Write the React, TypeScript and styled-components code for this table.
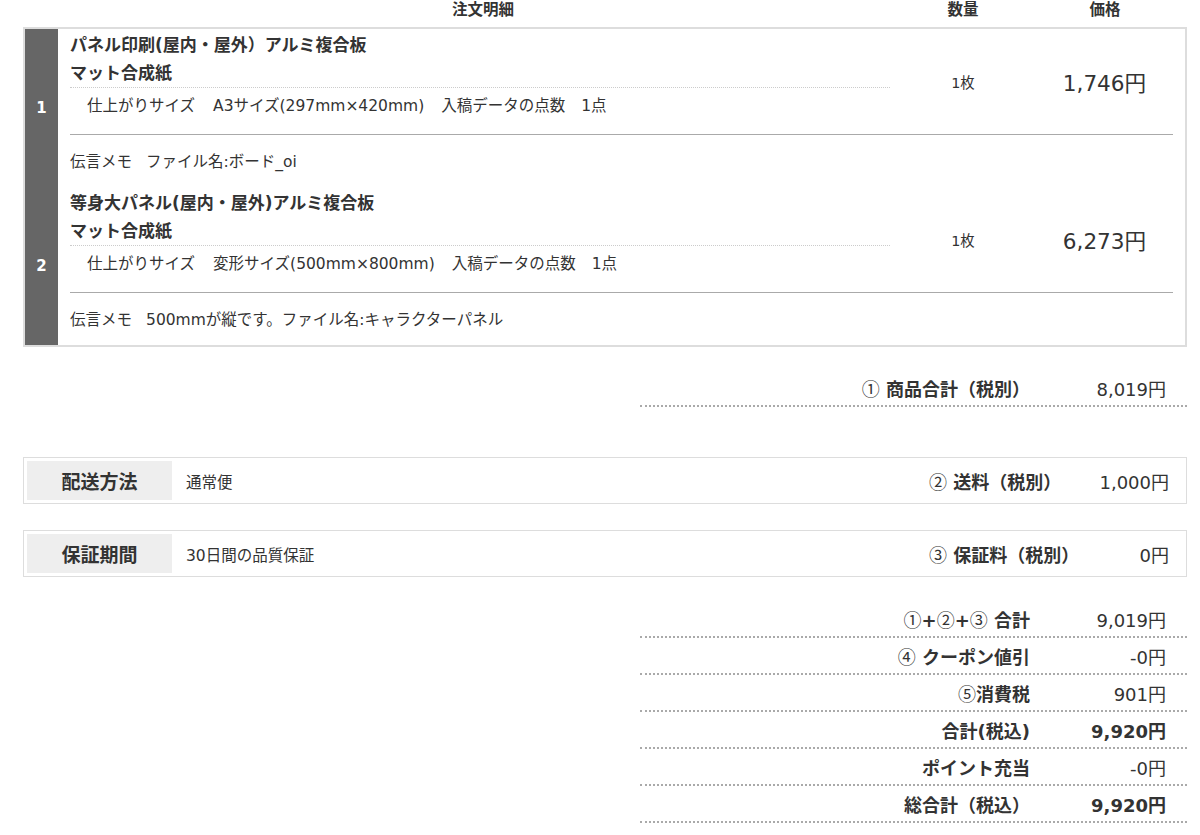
import React from "react";
import styled, { createGlobalStyle } from "styled-components";

const GlobalStyle = createGlobalStyle`
  html, body { margin: 0; padding: 0; background: #fff; }
  body {
    font-family: "DejaVu Sans", "Noto Sans CJK JP", sans-serif;
    color: #333;
  }
  * { box-sizing: border-box; }
`;

const Page = styled.div`
  width: 1200px;
  padding: 0 13px 0 23px;
`;

const HeaderRow = styled.div`
  display: grid;
  grid-template-columns: 47px 826px 134px 150px;
  height: 27px;
  line-height: 20px;
  font-size: 15.5px;
  font-weight: bold;
  color: #333;
`;

const HeaderCell = styled.div`
  text-align: center;
`;

const Table = styled.div`
  border: 2px solid #ddd;
`;

const ItemRow = styled.div`
  display: grid;
  grid-template-columns: 33px 1fr;
`;

const NumCell = styled.div`
  background: #666;
  color: #fff;
  font-weight: bold;
  font-size: 15px;
  display: flex;
  align-items: center;
  justify-content: center;
`;

const ItemBody = styled.div`
  padding: 0 12px;
`;

const Product = styled.div`
  display: grid;
  grid-template-columns: 1fr 146px 137px;
  border-bottom: 1px solid #aaa;
`;

const Desc = styled.div``;

const Title = styled.div`
  padding-top: 2px;
  font-size: 17px;
  font-weight: bold;
  line-height: 28px;
  border-bottom: 1px dotted #ccc;
`;

const Spec = styled.div`
  display: flex;
  padding: 6px 0 16px 17px;
  font-size: 15.5px;
  line-height: 24px;
`;

const SpecItem = styled.span`
  margin-right: 17px;
`;

const SpecValue = styled.span<{ $gap: number }>`
  margin-left: ${(p) => p.$gap}px;
`;

const Qty = styled.div`
  display: flex;
  align-items: center;
  justify-content: center;
  font-size: 14.4px;
`;

const Price = styled.div`
  display: flex;
  align-items: center;
  justify-content: center;
  font-size: 21.6px;
`;

const Memo = styled.div`
  padding: 15px 0 13px;
  font-size: 15.5px;
  line-height: 24px;
`;

const MemoValue = styled.span`
  margin-left: 14px;
`;

const SummaryList = styled.div<{ $top: number }>`
  width: 547px;
  margin-left: auto;
  margin-top: ${(p) => p.$top}px;
`;

const SummaryRow = styled.div`
  display: grid;
  grid-template-columns: 1fr 157px;
  align-items: center;
  height: 37px;
  padding: 5px 0 0;
  font-size: 18px;
  line-height: 26px;
  border-bottom: 2px dotted #aaa;
`;

const SumLabel = styled.div`
  text-align: right;
  font-weight: bold;
`;

const SumValue = styled.div<{ $bold?: boolean }>`
  text-align: right;
  padding-right: 21px;
  font-weight: ${(p) => (p.$bold ? "bold" : "normal")};
`;

const Circ = styled.span`
  font-family: "Noto Sans CJK JP", sans-serif;
  font-weight: normal;
  line-height: 1;
`;

const InfoBox = styled.div<{ $top: number }>`
  display: flex;
  margin-top: ${(p) => p.$top}px;
  border: 1px solid #ddd;
  padding: 3px;
`;

const BoxLabel = styled.div`
  width: 145px;
  height: 39px;
  background: #eee;
  font-size: 19px;
  font-weight: bold;
  display: flex;
  align-items: center;
  justify-content: center;
`;

const BoxValue = styled.div`
  flex: 1;
  margin-left: 14px;
  font-size: 15.5px;
  display: flex;
  align-items: center;
`;

const BoxFee = styled.div`
  width: 254px;
  padding-right: 14px;
  display: flex;
  align-items: center;
  justify-content: space-between;
  font-size: 18px;
`;

const FeeLabel = styled.span`
  font-weight: bold;
`;

function withCircles(text: string) {
  return text.split(/([①-⑤])/).map((part, i) =>
    /^[①-⑤]$/.test(part) ? (
      <Circ key={i}>{part}</Circ>
    ) : (
      <React.Fragment key={i}>{part}</React.Fragment>
    )
  );
}

type Item = {
  no: number;
  title: string[];
  size: string;
  count: string;
  qty: string;
  price: string;
  memo: string;
};

const items: Item[] = [
  {
    no: 1,
    title: ["パネル印刷(屋内・屋外）アルミ複合板", "マット合成紙"],
    size: "A3サイズ(297mm×420mm)",
    count: "1点",
    qty: "1枚",
    price: "1,746円",
    memo: "ファイル名:ボード_oi",
  },
  {
    no: 2,
    title: ["等身大パネル(屋内・屋外)アルミ複合板", "マット合成紙"],
    size: "変形サイズ(500mm×800mm)",
    count: "1点",
    qty: "1枚",
    price: "6,273円",
    memo: "500mmが縦です。ファイル名:キャラクターパネル",
  },
];

const totals: { label: string; value: string; bold?: boolean }[] = [
  { label: "①+②+③ 合計", value: "9,019円" },
  { label: "④ クーポン値引", value: "-0円" },
  { label: "⑤消費税", value: "901円" },
  { label: "合計(税込)", value: "9,920円", bold: true },
  { label: "ポイント充当", value: "-0円" },
  { label: "総合計（税込）", value: "9,920円", bold: true },
];

export default function App() {
  return (
    <Page>
      <GlobalStyle />
      <HeaderRow>
        <div />
        <HeaderCell>注文明細</HeaderCell>
        <HeaderCell>数量</HeaderCell>
        <HeaderCell>価格</HeaderCell>
      </HeaderRow>
      <Table>
        {items.map((it) => (
          <ItemRow key={it.no}>
            <NumCell>{it.no}</NumCell>
            <ItemBody>
              <Product>
                <Desc>
                  <Title>
                    {it.title.map((t) => (
                      <div key={t}>{t}</div>
                    ))}
                  </Title>
                  <Spec>
                    <SpecItem>
                      仕上がりサイズ<SpecValue $gap={18}>{it.size}</SpecValue>
                    </SpecItem>
                    <SpecItem>
                      入稿データの点数<SpecValue $gap={16}>{it.count}</SpecValue>
                    </SpecItem>
                  </Spec>
                </Desc>
                <Qty>{it.qty}</Qty>
                <Price>{it.price}</Price>
              </Product>
              <Memo>
                伝言メモ<MemoValue>{it.memo}</MemoValue>
              </Memo>
            </ItemBody>
          </ItemRow>
        ))}
      </Table>

      <SummaryList $top={23}>
        <SummaryRow>
          <SumLabel>{withCircles("① 商品合計（税別）")}</SumLabel>
          <SumValue>8,019円</SumValue>
        </SummaryRow>
      </SummaryList>

      <InfoBox $top={50}>
        <BoxLabel>配送方法</BoxLabel>
        <BoxValue>通常便</BoxValue>
        <BoxFee>
          <FeeLabel>{withCircles("② 送料（税別）")}</FeeLabel>
          <span>1,000円</span>
        </BoxFee>
      </InfoBox>

      <InfoBox $top={26}>
        <BoxLabel>保証期間</BoxLabel>
        <BoxValue>30日間の品質保証</BoxValue>
        <BoxFee>
          <FeeLabel>{withCircles("③ 保証料（税別）")}</FeeLabel>
          <span>0円</span>
        </BoxFee>
      </InfoBox>

      <SummaryList $top={24}>
        {totals.map((t) => (
          <SummaryRow key={t.label}>
            <SumLabel>{withCircles(t.label)}</SumLabel>
            <SumValue $bold={t.bold}>{t.value}</SumValue>
          </SummaryRow>
        ))}
      </SummaryList>
    </Page>
  );
}
